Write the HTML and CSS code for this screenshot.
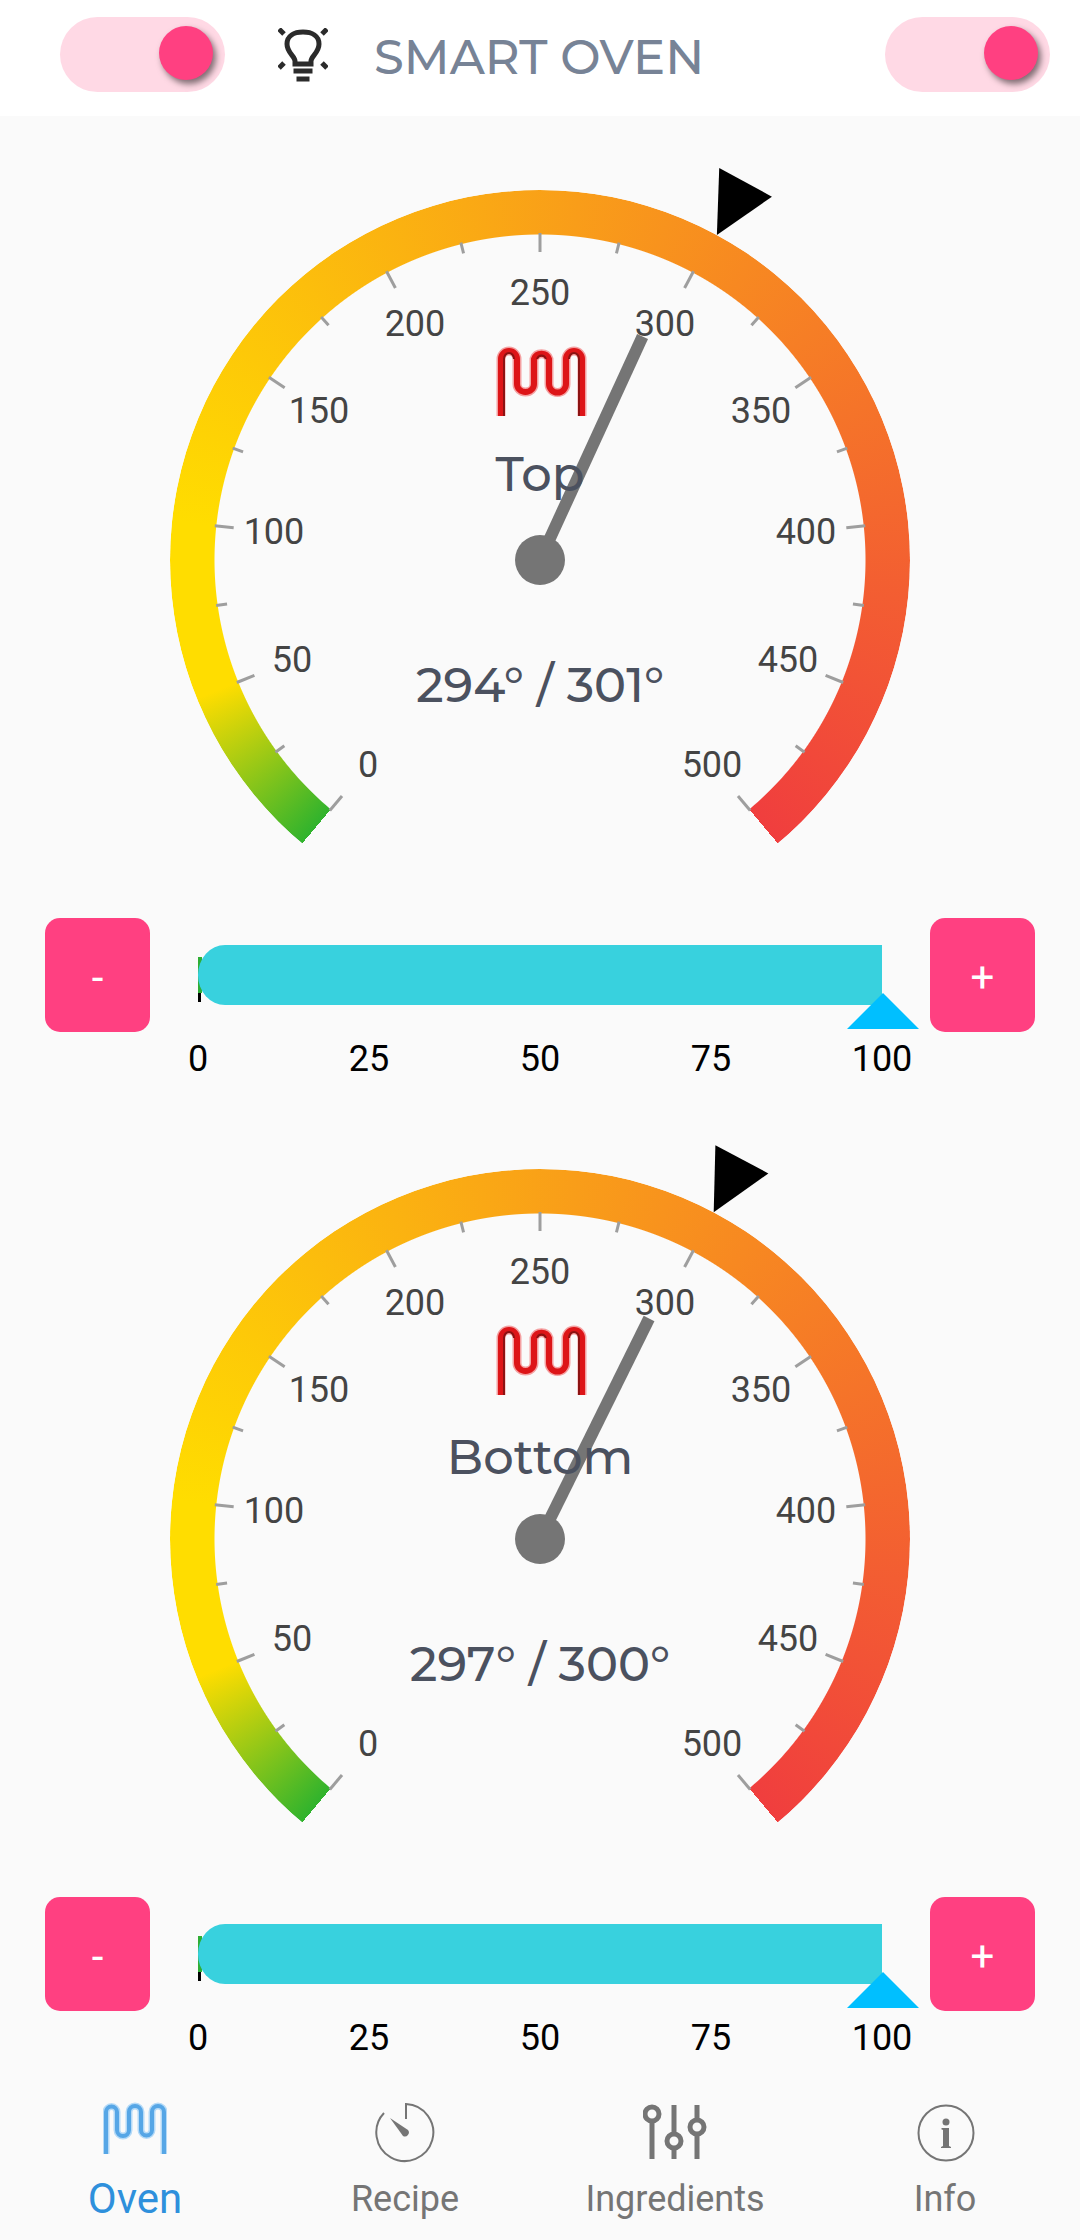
FILE: index.html
```html
<!DOCTYPE html>
<html lang="en">
<head>
<meta charset="utf-8">
<meta name="viewport" content="width=device-width, initial-scale=1">
<title>Smart Oven</title>
<link rel="stylesheet" href="styles.css">
</head>
<body>
<header class="topbar">
  <input class="switch" type="checkbox" aria-label="Light" checked>
  <svg class="bulb" viewBox="0 0 50 54" aria-hidden="true">
    <path d="M17 36v-3c0-5-8-8-8-17C9 8 16 4 25 4s16 4 16 12c0 9-8 12-8 17v3z"/>
    <path d="M15.500 43h19M18.500 51h13"/>
    <path class="ray" d="M1 1l5 5M49 1l-5 5M1 40l5-5M49 40l-5-5"/>
  </svg>
  <h1 class="title">SMART OVEN</h1>
  <input class="switch switch-power" type="checkbox" aria-label="Power" checked>
</header>

<main>
  <section class="zone">
    <svg class="gauge" viewBox="0 0 1080 784" data-value="294" data-target="301" role="img" aria-label="Top temperature">
      <foreignObject x="170" y="74" width="740" height="740"><div class="ring"></div></foreignObject>
      <g class="dial"></g>
      <text class="label" x="540" y="375">Top</text>
      <text class="label" x="540" y="586">294° / 301°</text>
    </svg>
    <div class="power">
      <button class="step" type="button" data-step="-5" aria-label="Decrease top power">-</button>
      <div class="slider">
        <div class="track"><div class="fill"></div></div>
        <input class="range" type="range" min="0" max="100" value="100" aria-label="Top power">
        <div class="scale"><span>0</span><span>25</span><span>50</span><span>75</span><span>100</span></div>
      </div>
      <button class="step" type="button" data-step="5" aria-label="Increase top power">+</button>
    </div>
  </section>

  <section class="zone">
    <svg class="gauge" viewBox="0 0 1080 784" data-value="297" data-target="300" role="img" aria-label="Bottom temperature">
      <foreignObject x="170" y="74" width="740" height="740"><div class="ring"></div></foreignObject>
      <g class="dial"></g>
      <text class="label" x="540" y="379">Bottom</text>
      <text class="label" x="540" y="586">297° / 300°</text>
    </svg>
    <div class="power">
      <button class="step" type="button" data-step="-5" aria-label="Decrease bottom power">-</button>
      <div class="slider">
        <div class="track"><div class="fill"></div></div>
        <input class="range" type="range" min="0" max="100" value="100" aria-label="Bottom power">
        <div class="scale"><span>0</span><span>25</span><span>50</span><span>75</span><span>100</span></div>
      </div>
      <button class="step" type="button" data-step="5" aria-label="Increase bottom power">+</button>
    </div>
  </section>
</main>

<nav class="tabs">
  <a class="tab active" href="#oven">
    <svg viewBox="0 0 64 64" aria-hidden="true">
      <path class="glow" d="M3 55V13a5.500 5.500 0 0 1 11 0v18a6 6 0 0 0 12 0V13a6 6 0 0 1 12 0v18a5.500 5.500 0 0 0 11 0V13a6 6 0 0 1 12 0v42"/>
      <path class="wire" d="M3 55V13a5.500 5.500 0 0 1 11 0v18a6 6 0 0 0 12 0V13a6 6 0 0 1 12 0v18a5.500 5.500 0 0 0 11 0V13a6 6 0 0 1 12 0v42"/>
    </svg>
    <span>Oven</span>
  </a>
  <a class="tab" href="#recipe">
    <svg viewBox="0 0 64 64" aria-hidden="true">
      <path class="thin" d="M33 20V5a28.500 28.500 0 1 1-22 9"/>
      <path class="solid" d="M17 19l18 12a4 4 0 0 1-5 6z"/>
    </svg>
    <span>Recipe</span>
  </a>
  <a class="tab" href="#ingredients">
    <svg viewBox="0 0 64 64" aria-hidden="true">
      <g class="thick">
        <circle cx="9" cy="15" r="7"/><path d="M9 22v38"/>
        <circle cx="31" cy="42" r="7"/><path d="M31 6v29M31 49v11"/>
        <circle cx="54" cy="28" r="7"/><path d="M54 6v15M54 35v25"/>
      </g>
    </svg>
    <span>Ingredients</span>
  </a>
  <a class="tab" href="#info">
    <svg viewBox="0 0 64 64" aria-hidden="true">
      <circle class="thin" cx="33" cy="34" r="27.500"/>
      <circle class="solid" cx="33" cy="23" r="3.500"/>
      <path class="solid" d="M29 29h7v18l2 1v1h-10v-1l2-1V31l-2-1z"/>
    </svg>
    <span>Info</span>
  </a>
</nav>
<script src="script.js"></script>
</body>
</html>
```
FILE: styles.css
```css
* {
  box-sizing: border-box;
}

body {
  margin: 0;
  min-height: 100vh;
  display: flex;
  flex-direction: column;
  background: #fafafa;
  font-family: Roboto, "Noto Sans", sans-serif;
  font-size: 36px;
  color: #000;
}

.topbar {
  display: flex;
  align-items: center;
  padding: 17px 30px 24px 60px;
  background: #fff;
}

.switch {
  appearance: none;
  flex: none;
  display: flex;
  justify-content: flex-start;
  width: 165px;
  height: 75px;
  margin: 0;
  padding: 9px 12px;
  border-radius: 38px;
  background: #ffd9e5;
}

.switch::before {
  content: "";
  width: 54px;
  height: 54px;
  border-radius: 50%;
  background: #ff4081;
  box-shadow: 3px 4px 6px rgba(0, 0, 0, 0.5);
}

.switch:checked {
  justify-content: flex-end;
}

.switch-power {
  margin-left: auto;
}

.bulb {
  width: 50px;
  height: 54px;
  margin-left: 53px;
  fill: none;
  stroke: #2b2b2b;
  stroke-width: 5;
}

.title {
  margin: 0 0 0 46px;
  padding-top: 4px;
  font-family: Montserrat, Inter, sans-serif;
  font-size: 48px;
  line-height: 56px;
  font-weight: 500;
  color: #778396;
}

.gauge {
  display: block;
  width: 100%;
  overflow: visible;
}

.ring {
  width: 740px;
  height: 740px;
  border-radius: 50%;
  background: conic-gradient(from 220deg, #30b32d 0deg, #ffdd00 28deg, #ffdd00 56deg, #f03e3e 280deg, transparent 280deg);
  mask: radial-gradient(closest-side, transparent 325px, #000 326px);
}

.tick {
  stroke: #9e9e9e;
  stroke-width: 3;
}

.number {
  font-size: 36px;
  fill: #444;
  text-anchor: middle;
}

.needle {
  fill: #757575;
}

.target {
  fill: #000;
}

.coil {
  fill: none;
  stroke: #dd1518;
  stroke-width: 6;
}

.coil-edge {
  fill: none;
  stroke: #f4a0a1;
  stroke-width: 9;
}

.coil-shade {
  fill: none;
  stroke: #8c1212;
  stroke-width: 2;
}

.label {
  font-family: Montserrat, Inter, sans-serif;
  font-size: 48px;
  font-weight: 500;
  fill: #4b515f;
  text-anchor: middle;
}

.power {
  display: grid;
  grid-template-columns: 105px 1fr 105px;
  column-gap: 48px;
  align-items: start;
  padding: 18px 45px 15px;
}

.step {
  height: 114px;
  padding: 4px 0 0;
  border: 0;
  border-radius: 15px;
  background: #ff4081;
  color: #fff;
  font-family: inherit;
  font-size: 42px;
  font-weight: 400;
}

.slider {
  display: grid;
  grid-template-rows: 84px 51px;
  padding-top: 27px;
}

.track {
  grid-area: 1 / 1;
  height: 60px;
  background:
    linear-gradient(#2fae35, #2fae35) 0 12px / 4px 36px no-repeat,
    linear-gradient(#000, #000) 0 48px / 3px 9px no-repeat;
}

.fill {
  width: 100%;
  height: 60px;
  border-radius: 27px 0 0 27px / 30px 0 0 30px;
  background: #38d1de;
}

.range {
  grid-area: 1 / 1;
  appearance: none;
  align-self: end;
  height: 36px;
  margin: 0 -37px 0 -35px;
  background: none;
}

.range::-webkit-slider-thumb {
  appearance: none;
  width: 72px;
  height: 36px;
  background: #00bfff;
  clip-path: polygon(50% 0, 100% 100%, 0 100%);
}

.scale {
  display: flex;
  justify-content: space-between;
  padding-top: 9px;
  line-height: 42px;
}

.scale span {
  display: flex;
  justify-content: center;
  width: 0;
}

.tabs {
  display: grid;
  grid-template-columns: repeat(4, 1fr);
  padding: 25px 0 14px;
}

.tab {
  display: flex;
  flex-direction: column;
  align-items: center;
  gap: 12px;
  color: #757575;
  line-height: 48px;
  text-decoration: none;
}

.tab svg {
  width: 64px;
  height: 64px;
  fill: none;
  stroke: currentColor;
}

.tab.active {
  color: #2e90dc;
  font-size: 42px;
}

.tab .wire {
  stroke: #56a6e6;
  stroke-width: 4;
}

.tab .glow {
  stroke: #b5daf7;
  stroke-width: 7;
}

.tab .thin {
  stroke-width: 2;
}

.tab .thick {
  stroke-width: 5;
}

.tab .solid {
  fill: currentColor;
  stroke: none;
}
```
FILE: script.js
```js
// The dial sweeps 280 degrees for 0-500, with 250 pointing straight up.
const CX = 540;
const CY = 444;
const turn = (value) => (value - 250) * 0.56;

const COIL = "M501 300V243a8 8 0 0 1 16 0v25a8.500 8 0 0 0 17 0V243a8 8 0 0 1 15 0v25a8 8 0 0 0 17 0V243a8 8 0 0 1 16 0v57";
const SHADE = "M504 300V243a5 6 0 0 1 10 0M537 243a5 6 0 0 1 9 0M569 243a5 6 0 0 1 10 0v57";

document.querySelectorAll(".gauge").forEach((gauge) => {
  const parts = [];
  for (let v = 0; v <= 500; v += 25) {
    const major = v % 50 === 0;
    const inner = major ? 308 : 316;
    parts.push(`<line class="tick" x1="${CX}" x2="${CX}" y1="${CY - 327}" y2="${CY - inner}" transform="rotate(${turn(v)} ${CX} ${CY})"/>`);
    if (major) {
      const a = (turn(v) * Math.PI) / 180;
      const x = Math.round(CX + 267 * Math.sin(a));
      const y = Math.round(CY - 267 * Math.cos(a)) + 12;
      parts.push(`<text class="number" x="${x}" y="${y}">${v}</text>`);
    }
  }
  parts.push(`<path class="coil-edge" d="${COIL}"/><path class="coil" d="${COIL}"/><path class="coil-shade" d="${SHADE}"/>`);
  parts.push(`<rect class="needle" x="${CX - 6}" y="${CY - 246}" width="12" height="246" transform="rotate(${turn(gauge.dataset.value)} ${CX} ${CY})"/>`);
  parts.push(`<circle class="needle" cx="${CX}" cy="${CY}" r="25"/>`);
  parts.push(`<polygon class="target" points="540,74 510,14 570,14" transform="rotate(${turn(gauge.dataset.target)} ${CX} ${CY})"/>`);
  gauge.querySelector(".dial").innerHTML = parts.join("");
});

document.querySelectorAll(".power").forEach((row) => {
  const range = row.querySelector(".range");
  const fill = row.querySelector(".fill");
  const update = () => { fill.style.width = range.value + "%"; };
  range.addEventListener("input", update);
  row.querySelectorAll(".step").forEach((button) => {
    button.addEventListener("click", () => {
      range.value = Number(range.value) + Number(button.dataset.step);
      update();
    });
  });
});
```
